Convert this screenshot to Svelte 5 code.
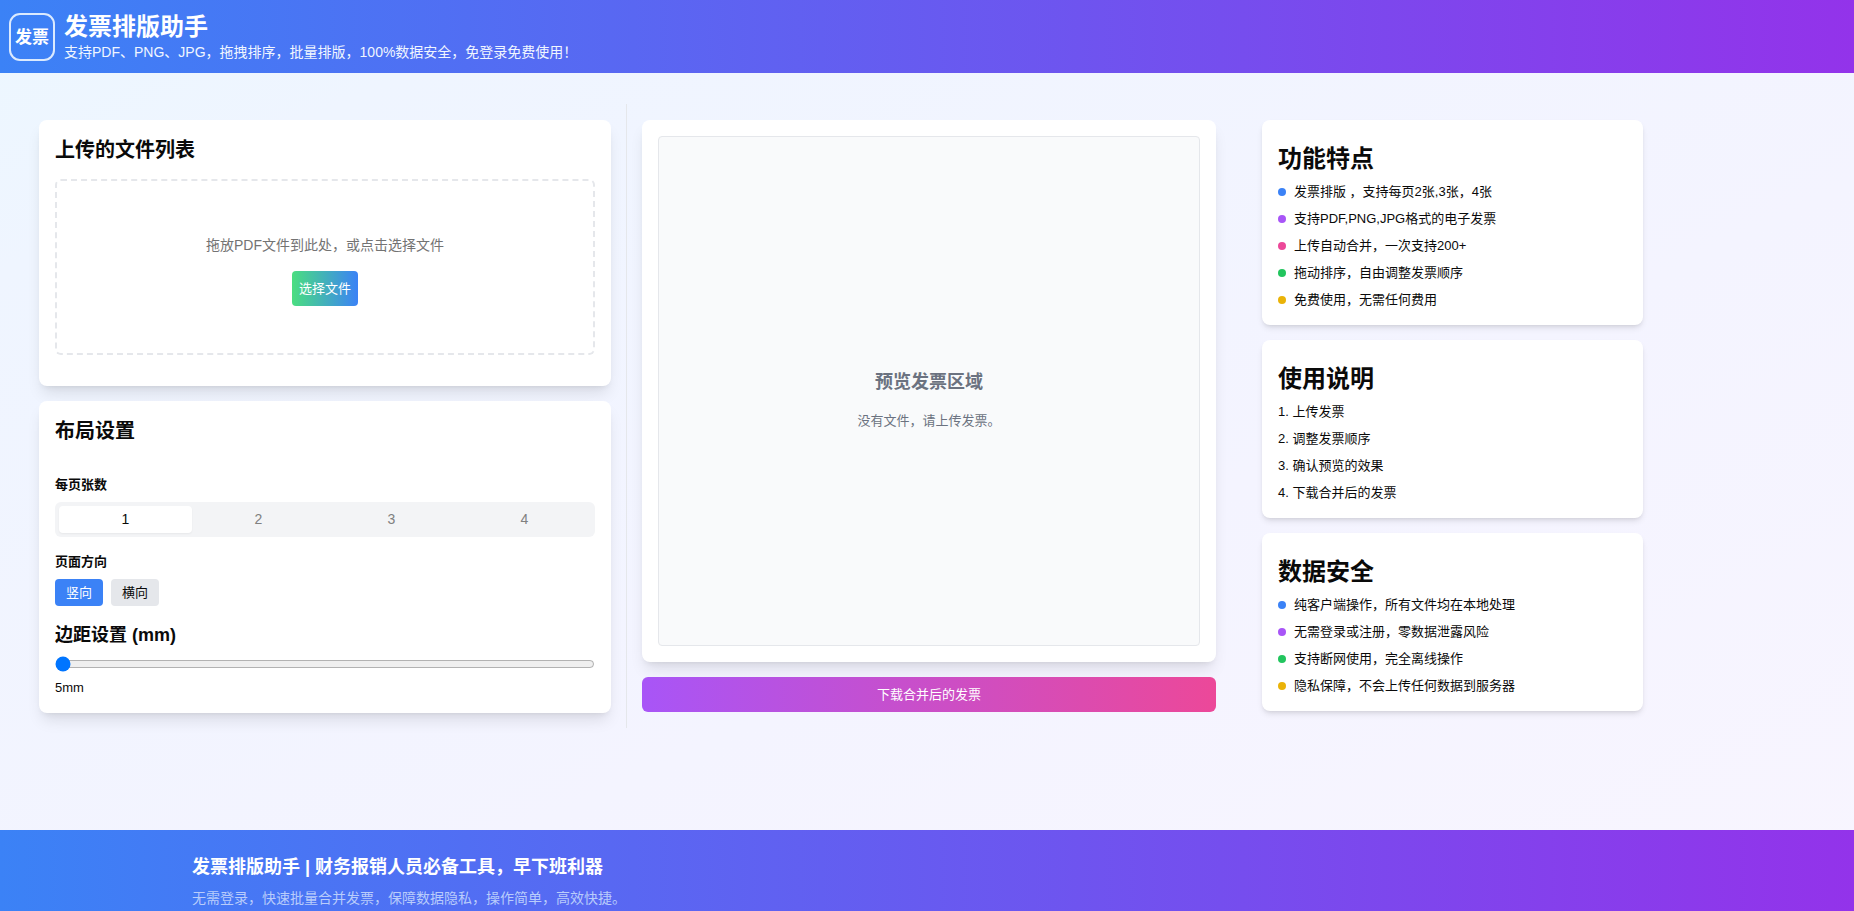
<script lang="ts">
  const pageCounts = [1, 2, 3, 4];
  const orientations = ['竖向', '横向'];

  const features = [
    { color: 'blue', text: '发票排版 ，支持每页2张,3张，4张' },
    { color: 'purple', text: '支持PDF,PNG,JPG格式的电子发票' },
    { color: 'pink', text: '上传自动合并，一次支持200+' },
    { color: 'green', text: '拖动排序，自由调整发票顺序' },
    { color: 'yellow', text: '免费使用，无需任何费用' },
  ];

  const steps = ['上传发票', '调整发票顺序', '确认预览的效果', '下载合并后的发票'];

  const security = [
    { color: 'blue', text: '纯客户端操作，所有文件均在本地处理' },
    { color: 'purple', text: '无需登录或注册，零数据泄露风险' },
    { color: 'green', text: '支持断网使用，完全离线操作' },
    { color: 'yellow', text: '隐私保障，不会上传任何数据到服务器' },
  ];

  let perPage = $state(1);
  let orientation = $state('竖向');
  let margin = $state(5);
  let picker: HTMLInputElement;
</script>

<div class="page">
  <header>
    <svg class="logo" viewBox="0 0 48 48" aria-hidden="true">
      <rect x="2" y="1" width="44" height="46" rx="10" fill="none" stroke="#dbeafe" stroke-width="2" />
      <text x="24" y="30" text-anchor="middle">发票</text>
    </svg>
    <div>
      <h1>发票排版助手</h1>
      <p>支持PDF、PNG、JPG，拖拽排序，批量排版，100%数据安全，免登录免费使用！</p>
    </div>
  </header>

  <main>
    <section class="column settings">
      <div class="card upload">
        <h2>上传的文件列表</h2>
        <div class="dropzone">
          <p>拖放PDF文件到此处，或点击选择文件</p>
          <input type="file" accept=".pdf,.png,.jpg" multiple hidden bind:this={picker} />
          <button class="choose" onclick={() => picker.click()}>选择文件</button>
        </div>
      </div>

      <div class="card layout">
        <h2>布局设置</h2>
        <h4>每页张数</h4>
        <div class="tabs">
          {#each pageCounts as count}
            <button class:active={perPage === count} onclick={() => (perPage = count)}>{count}</button>
          {/each}
        </div>
        <h4>页面方向</h4>
        <div class="orientation">
          {#each orientations as item}
            <button class:active={orientation === item} onclick={() => (orientation = item)}>{item}</button>
          {/each}
        </div>
        <label for="margin">边距设置 (mm)</label>
        <input id="margin" type="range" min="5" max="50" bind:value={margin} />
        <p class="value">{margin}mm</p>
      </div>
    </section>

    <section class="column preview">
      <div class="card">
        <div class="canvas">
          <h3>预览发票区域</h3>
          <p>没有文件，请上传发票。</p>
        </div>
      </div>
      <button class="download">下载合并后的发票</button>
    </section>

    <aside class="column info">
      <div class="card">
        <h2>功能特点</h2>
        <ul>
          {#each features as item}
            <li><span class="dot {item.color}"></span>{item.text}</li>
          {/each}
        </ul>
      </div>
      <div class="card">
        <h2>使用说明</h2>
        <ol>
          {#each steps as step}
            <li>{step}</li>
          {/each}
        </ol>
      </div>
      <div class="card">
        <h2>数据安全</h2>
        <ul>
          {#each security as item}
            <li><span class="dot {item.color}"></span>{item.text}</li>
          {/each}
        </ul>
      </div>
    </aside>
  </main>

  <footer>
    <div class="container">
      <h3>发票排版助手 | 财务报销人员必备工具，早下班利器</h3>
      <p>无需登录，快速批量合并发票，保障数据隐私，操作简单，高效快捷。</p>
    </div>
  </footer>
</div>

<style>
  :global(body) {
    margin: 0;
  }

  .page {
    display: flex;
    flex-direction: column;
    height: 100vh;
    overflow: hidden;
    background: linear-gradient(to bottom right, #ecf7ff, #eff5ff 15%, #f4f4ff 60%, #f8f5ff);
    color: #0a0a0a;
    font-family: "Liberation Sans", "Noto Sans CJK SC", sans-serif;
    font-size: 13px;
    line-height: 19px;
  }

  h1, h2, h3, h4, p, ul, ol {
    margin: 0;
    padding: 0;
  }

  button {
    border: none;
    padding: 0;
    font: inherit;
    color: inherit;
    cursor: pointer;
  }

  header {
    display: flex;
    align-items: center;
    gap: 8px;
    height: 73px;
    padding: 0 8px;
    box-sizing: border-box;
    flex-shrink: 0;
    background: linear-gradient(to right, #3b82f6, #9333ea);
    color: white;
  }

  .logo {
    width: 48px;
    height: 48px;
  }

  .logo text {
    font-size: 17px;
    font-weight: bold;
    fill: white;
  }

  header h1 {
    font-size: 24px;
    line-height: 30px;
  }

  header p {
    font-size: 14px;
    line-height: 20px;
    color: #f0f6ff;
  }

  main {
    display: grid;
    grid-template-columns: 151fr 151fr 103fr;
    flex: 1 0 auto;
    align-items: start;
    padding: 31px 211px 0 23px;
  }

  .column {
    display: flex;
    flex-direction: column;
    gap: 15px;
    box-sizing: border-box;
    height: 624px;
    padding: 16px 15px;
  }

  .settings {
    padding-left: 16px;
    border-right: 1px solid #e5e7eb;
  }

  .card {
    padding: 16px;
    border-radius: 8px;
    background: white;
    box-shadow: 0 10px 15px -3px rgba(0, 0, 0, 0.1), 0 4px 6px -4px rgba(0, 0, 0, 0.1);
  }

  .settings h2 {
    font-size: 20px;
    line-height: 28px;
  }

  .upload {
    padding-bottom: 31px;
  }

  .dropzone {
    display: flex;
    flex-direction: column;
    align-items: center;
    justify-content: center;
    gap: 16px;
    box-sizing: border-box;
    height: 176px;
    padding-top: 8px;
    margin-top: 15px;
    border: 2px dashed #e5e7eb;
    border-radius: 6px;
  }

  .dropzone p {
    font-size: 14px;
    color: #737373;
  }

  .choose {
    padding: 8px 7px;
    border-radius: 4px;
    background: linear-gradient(to right, #4ade80, #3b82f6);
    color: white;
  }

  .layout {
    display: flex;
    flex-direction: column;
    flex: 1;
  }

  h4 {
    margin-bottom: 8px;
    font-size: 13px;
  }

  .layout h2 {
    margin-bottom: 30px;
  }

  .tabs {
    display: grid;
    grid-template-columns: repeat(4, 1fr);
    padding: 4px;
    margin-bottom: 15px;
    border-radius: 6px;
    background: #f3f4f6;
    color: #808080;
    font-size: 14px;
  }

  .tabs button {
    height: 27px;
    border-radius: 4px;
    background: none;
  }

  .tabs .active {
    background: white;
    color: #0a0a0a;
    box-shadow: 0 1px 2px rgba(0, 0, 0, 0.05);
  }

  .orientation {
    display: flex;
    gap: 8px;
    margin-bottom: 16px;
  }

  .orientation button {
    padding: 4px 11px;
    border-radius: 4px;
    background: #e5e7eb;
  }

  .orientation .active {
    background: #3b82f6;
    color: white;
  }

  label {
    font-size: 18px;
    font-weight: bold;
    line-height: 26px;
  }

  input[type='range'] {
    width: 100%;
    height: 16px;
    margin: 8px 0 6px;
  }

  .preview .card {
    display: flex;
    flex: 1;
  }

  .canvas {
    display: flex;
    flex: 1;
    flex-direction: column;
    align-items: center;
    justify-content: center;
    gap: 16px;
    padding-top: 16px;
    border: 1px solid #e5e7eb;
    border-radius: 4px;
    background: #f9fafb;
    color: #6b7280;
  }

  .canvas h3 {
    font-size: 18px;
    line-height: 26px;
  }

  .download {
    padding: 8px;
    border-radius: 6px;
    background: linear-gradient(to right, #a855f7, #ec4899);
    color: white;
  }

  .info {
    padding: 16px 0 16px 31px;
  }

  .info .card {
    padding-top: 24px;
    box-shadow: 0 4px 6px -1px rgba(0, 0, 0, 0.1), 0 2px 4px -2px rgba(0, 0, 0, 0.1);
  }

  .info h2 {
    margin-bottom: 8px;
    font-size: 24px;
    line-height: 30px;
  }

  ul, ol {
    display: flex;
    flex-direction: column;
    gap: 8px;
    list-style: none;
  }

  ul li {
    display: flex;
    align-items: center;
    gap: 8px;
    white-space: pre;
  }

  ol {
    list-style: decimal inside;
  }

  .dot {
    width: 8px;
    height: 8px;
    border-radius: 50%;
  }

  .blue { background: #3b82f6; }
  .purple { background: #a855f7; }
  .pink { background: #ec4899; }
  .green { background: #22c55e; }
  .yellow { background: #eab308; }

  footer {
    height: 81px;
    flex-shrink: 0;
    box-sizing: border-box;
    padding-top: 24px;
    background: linear-gradient(to right, #3b82f6, #9333ea);
    color: white;
  }

  .container {
    max-width: 1470px;
    margin: 0 auto;
  }

  footer h3 {
    margin-bottom: 8px;
    font-size: 18px;
    line-height: 26px;
  }

  footer p {
    font-size: 14px;
    line-height: 20px;
    color: #b9ccfb;
  }
</style>
